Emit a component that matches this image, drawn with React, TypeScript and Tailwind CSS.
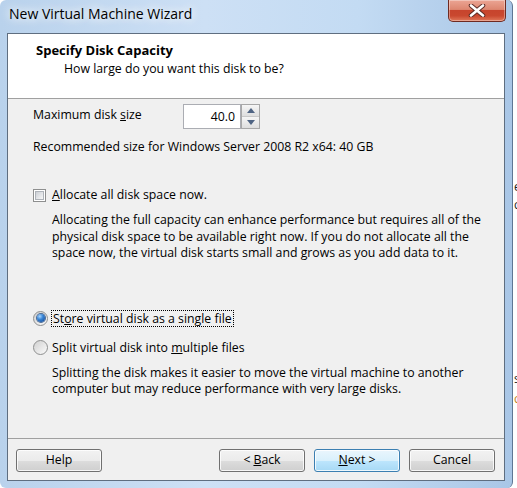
const uiFont = "font-['Open_Sans',sans-serif]";

function WinButton({
  children,
  primary = false,
}: {
  children: React.ReactNode;
  primary?: boolean;
}) {
  return (
    <div
      className={`w-[86px] h-[23px] rounded-[3px] border flex items-center justify-center leading-none shadow-[inset_0_0_0_1px_rgba(255,255,255,0.8)] ${
        primary
          ? "border-[#3c7fb1] bg-[linear-gradient(#eaf6fd_0%,#d9f0fc_50%,#bee6fd_50%,#a7d9f5_100%)]"
          : "border-[#707070] bg-[linear-gradient(#f2f2f2_0%,#ebebeb_50%,#dddddd_50%,#cfcfcf_100%)]"
      }`}
    >
      {children}
    </div>
  );
}

function Radio({ checked }: { checked?: boolean }) {
  return (
    <div className="w-[15px] h-[15px] rounded-full border border-[#8e8f8f] bg-[linear-gradient(135deg,#d0d0d0,#fbfbfb)] flex items-center justify-center shrink-0">
      {checked && (
        <div className="w-[8px] h-[8px] rounded-full bg-[radial-gradient(circle_at_35%_30%,#a9d6ff_0%,#3a86d6_40%,#0d3f8c_100%)] shadow-[0_0_0_1px_#4a6a94]" />
      )}
    </div>
  );
}

function Checkbox() {
  return (
    <div className="w-[13px] h-[13px] border border-[#8e8f8f] bg-white p-[1px] shrink-0">
      <div className="w-full h-full border border-[#aeb3b9] bg-[linear-gradient(135deg,#cbcfd5,#f7f7f7)]" />
    </div>
  );
}

function SpinBox() {
  return (
    <div className="flex h-[25px]">
      <div className="w-[58px] h-full border border-[#abadb3] bg-white flex items-center justify-end pr-[5px]">
        40.0
      </div>
      <div className="w-[19px] h-full border border-[#a8a8a8] flex flex-col bg-[#f0f0f0]">
        <div className="h-[12px] border-b border-[#c8c8c8] bg-[linear-gradient(#f6f6f6,#dedede)] flex items-center justify-center">
          <svg width="8" height="5" viewBox="0 0 8 5">
            <path d="M0 5 L4 0 L8 5 Z" fill="#4f6483" />
          </svg>
        </div>
        <div className="flex-1 bg-[linear-gradient(#f6f6f6,#dedede)] flex items-center justify-center">
          <svg width="8" height="5" viewBox="0 0 8 5">
            <path d="M0 0 L4 5 L8 0 Z" fill="#4f6483" />
          </svg>
        </div>
      </div>
    </div>
  );
}

export default function App() {
  return (
    <div className={`w-[517px] h-[488px] bg-white flex overflow-hidden text-[12.3px] text-black ${uiFont}`}>
      {/* Window frame */}
      <div className="w-[513px] h-[488px] shrink-0 flex flex-col relative rounded-[6px] border-r border-[#5f7794] bg-[linear-gradient(90deg,#b9d2ec_0%,#cde0f5_40%,#c3dbf3_70%,#a9c6e6_100%)]">
        {/* Title bar */}
        <div className="h-[33px] shrink-0 pl-[9px] pt-[4px] flex items-start">
          <span className="text-[14px] leading-[20px] text-black [text-shadow:0_0_8px_#ffffff,0_0_12px_#ffffff]">
            New Virtual Machine Wizard
          </span>
        </div>

        {/* Close button */}
        <div className="absolute top-0 right-[6px] w-[58px] h-[22px] rounded-b-[5px] border border-t-0 border-[#6e2a21] bg-[linear-gradient(#eba594_0%,#dd8670_45%,#c7442d_50%,#c9482f_75%,#e0785a_100%)] shadow-[inset_0_0_0_1px_rgba(255,255,255,0.35)] flex items-center justify-center">
          <svg width="18" height="13" viewBox="0 0 18 13">
            <path d="M3 1.5 L15 11.5 M15 1.5 L3 11.5" stroke="#5a2a24" strokeWidth="4.5" strokeLinecap="round" />
            <path d="M3 1.5 L15 11.5 M15 1.5 L3 11.5" stroke="#ffffff" strokeWidth="2.6" strokeLinecap="round" />
          </svg>
        </div>

        {/* Client area */}
        <div className="mx-[7px] h-[448px] border border-[#5f6e80] bg-[#f0f0f0] flex flex-col">
          {/* Header */}
          <div className="h-[65px] shrink-0 bg-white border-b border-[#a0a0a0] pt-[8px]">
            <div className="pl-[28px] font-bold text-[13px] leading-[16px]">Specify Disk Capacity</div>
            <div className="pl-[56px] mt-[3px] leading-[16px]">How large do you want this disk to be?</div>
          </div>

          {/* Body */}
          <div className="h-[339px] shrink-0 pl-[25px] pr-[10px] leading-[16px] flex flex-col">
            <div className="flex mt-[5px]">
              <div className="w-[150px] mt-[3px] h-[19px] overflow-hidden">
                <div>
                  Maximum disk <span className="underline">s</span>ize
                </div>
                <div>(GB):</div>
              </div>
              <SpinBox />
            </div>

            <div className="mt-[10px]">Recommended size for Windows Server 2008 R2 x64: 40 GB</div>

            <div className="mt-[32px] flex items-center gap-[6px]">
              <Checkbox />
              <span>
                <span className="underline">A</span>llocate all disk space now.
              </span>
            </div>

            <div className="mt-[9px] ml-[19px] leading-[16.5px] whitespace-nowrap">
              Allocating the full capacity can enhance performance but requires all of the
              <br />
              physical disk space to be available right now. If you do not allocate all the
              <br />
              space now, the virtual disk starts small and grows as you add data to it.
            </div>

            <div className="mt-[48px] flex items-center gap-[3px]">
              <Radio checked />
              <span className="border border-dotted border-black px-[1px] leading-[15px]">
                St<span className="underline">o</span>re virtual disk as a single file
              </span>
            </div>

            <div className="mt-[13px] flex items-center gap-[4px]">
              <Radio />
              <span>
                Split virtual disk into <span className="underline">m</span>ultiple files
              </span>
            </div>

            <div className="mt-[9px] ml-[19px] whitespace-nowrap">
              Splitting the disk makes it easier to move the virtual machine to another
              <br />
              computer but may reduce performance with very large disks.
            </div>
          </div>

          {/* Footer */}
          <div className="h-[42px] shrink-0 border-t border-[#a0a0a0] pt-[10px] pl-[8px] pr-[9px] flex">
            <WinButton>Help</WinButton>
            <div className="flex-1" />
            <div className="flex gap-[9px]">
              <WinButton>
                &lt; <span className="underline ml-[3px]">B</span>ack
              </WinButton>
              <WinButton primary>
                <span className="underline">N</span>ext &gt;
              </WinButton>
              <WinButton>Cancel</WinButton>
            </div>
          </div>
        </div>
      </div>

      {/* Desktop behind the window */}
      <div className="flex-1 bg-white flex flex-col text-[12px] leading-[14px] text-[#222] overflow-hidden">
        <div className="mt-[180px] pl-[1px]">e</div>
        <div className="mt-[4px] pl-[1px]">c</div>
        <div className="mt-[160px] pl-[1px]">s</div>
        <div className="mt-[6px] pl-[1px] text-[#c08020]">c</div>
      </div>
    </div>
  );
}
